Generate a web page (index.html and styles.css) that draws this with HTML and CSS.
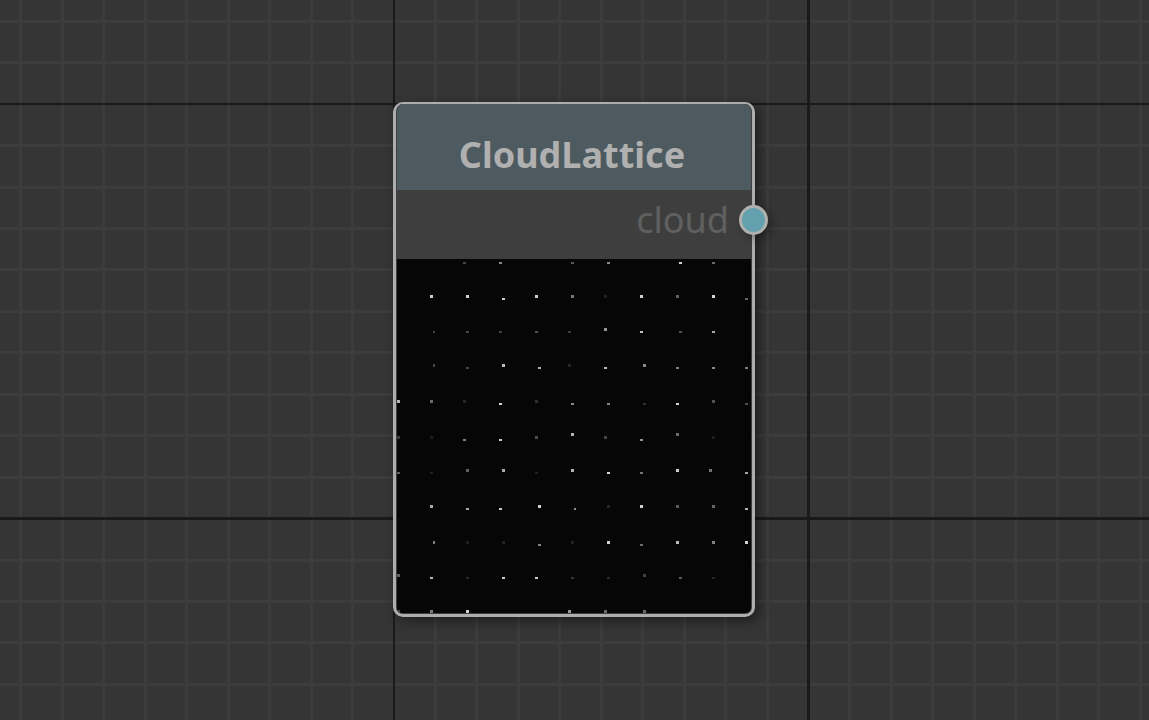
FILE: index.html
```html
<!DOCTYPE html>
<html lang="en">
<head>
<meta charset="utf-8">
<title>CloudLattice</title>
<link rel="stylesheet" href="styles.css">
</head>
<body>
<main class="graph">
  <svg class="grid" aria-hidden="true" shape-rendering="crispEdges">
    <path class="grid-minor"/>
    <path class="grid-major"/>
  </svg>
  <article class="node">
    <header class="node-header"><h1 class="node-title">CloudLattice</h1></header>
    <div class="node-output">
      <label class="port-label" for="port-cloud">cloud</label>
      <button class="port" id="port-cloud" type="button"></button>
    </div>
    <svg class="preview" viewBox="397 259 354 354" shape-rendering="crispEdges" role="img" aria-label="Preview"></svg>
  </article>
</main>
<script src="main.js"></script>
</body>
</html>
```
FILE: styles.css
```css
* {
  box-sizing: border-box;
}

body {
  margin: 0;
  background: #353535;
  font-family: "Noto Sans", "Open Sans", sans-serif;
}

.graph {
  position: relative;
  display: flex;
  align-items: center;
  justify-content: center;
  min-height: 100vh;
  padding: 0 1px 1px 0;
  overflow: hidden;
}

.grid {
  position: absolute;
  inset: 0;
  width: 100%;
  height: 100%;
}

.grid-minor {
  fill: #3c3c3c;
}

.grid-major {
  fill: #1a1a1a;
}

.node {
  position: relative;
  width: 362px;
  padding: 0 1px 1px;
  border: 3px solid #adadad;
  border-top-width: 2px;
  border-radius: 10px;
  background: rgba(64, 64, 64, 0.88) padding-box;
  box-shadow: 4px 4px 12px rgba(0, 0, 0, 0.45);
}

.node-header {
  display: flex;
  align-items: center;
  justify-content: center;
  height: 86px;
  padding: 16px 4px 0 0;
  border-radius: 7px 7px 0 0;
  background: rgba(80, 96, 103, 0.86);
}

.node-title {
  margin: 0;
  color: #b0b0b0;
  font-size: 36px;
  line-height: 48px;
  font-weight: 700;
}

.node-output {
  position: relative;
  display: flex;
  align-items: center;
  justify-content: flex-end;
  height: 69px;
  padding: 0 22px 10px 0;
}

.port-label {
  color: #606060;
  font-size: 36px;
  line-height: 48px;
}

.port {
  position: absolute;
  top: 15px;
  right: -17px;
  width: 29px;
  height: 30px;
  padding: 0;
  border: 3px solid #b0b0b0;
  border-radius: 50%;
  background: #64a1ae;
  box-shadow: 4px 4px 8px rgba(0, 0, 0, 0.3);
}

.preview {
  display: block;
  width: 100%;
  background: #060606;
  border-radius: 0 0 5px 5px;
}
```
FILE: main.js
```js
// Grid: a minor line every 41.45px, a major line every tenth, from the origin.
const STEP = 41.45;

function bands(origin, length) {
  const out = [];
  for (let k = -Math.floor(origin / STEP) - 1; origin + k * STEP < length + 2; k++) {
    const start = Math.round(origin + k * STEP - 1.7);
    out.push({ start, size: k === 0 ? 2 : 3, major: k % 10 === 0 });
  }
  return out;
}

function drawGrid() {
  const w = window.innerWidth;
  const h = window.innerHeight;
  const xs = bands(394.22, w);
  const ys = bands(104.3, h);
  const path = major =>
    xs.filter(b => b.major === major).map(b => `M${b.start} 0h${b.size}v${h}h-${b.size}z`).join('') +
    ys.filter(b => b.major === major).map(b => `M0 ${b.start}h${w}v${b.size}h-${w}z`).join('');
  document.querySelector('.grid-minor').setAttribute('d', path(false));
  document.querySelector('.grid-major').setAttribute('d', path(true));
}

drawGrid();
window.addEventListener('resize', drawGrid);

// Lattice points: x, y, height, grey level, optional width (3 by default).
const points = [
  [463,262,2,68],[499,262,2,136],[571,262,2,85],[607,262,2,136],[679,262,2,210],[712,262,2,105],
  [430,295,3,208],[466,295,3,208],[502,298,2,204],[535,295,3,208],[571,295,3,119],[604,295,3,34],[640,295,3,208],[676,295,3,96],[712,295,3,215],[745,298,2,102],
  [433,331,2,68,2],[466,331,2,68],[499,331,2,64],[535,331,2,80],[568,331,2,58],[604,328,3,150],[640,331,2,190],[679,331,2,78],[712,331,2,165],
  [433,364,3,72,2],[466,367,2,68],[502,364,3,187],[538,367,2,175],[568,364,3,37],[604,367,2,187],[643,364,3,136],[676,367,2,130],[712,367,2,136],[745,367,2,125],
  [397,400,3,180],[430,400,3,105],[463,400,3,37],[499,403,2,215],[535,400,3,48],[571,403,2,136],[607,403,2,130],[643,403,2,50],[676,403,2,215],[712,400,3,80],[745,403,2,80],
  [397,436,3,60],[430,436,3,29],[463,439,2,130],[499,439,2,200],[535,436,3,76],[571,433,3,180],[604,436,3,68],[640,439,2,150],[676,433,3,105],[712,436,3,29],
  [397,472,2,96],[430,472,2,32],[466,469,3,96],[502,469,3,170],[535,472,2,32],[571,469,3,180],[607,472,2,215],[640,472,2,115],[676,469,3,205],[709,469,3,115],[745,472,2,165],
  [430,505,3,170],[466,508,2,165],[499,508,2,200],[538,505,3,205],[574,508,2,145,2],[607,505,3,37],[640,505,3,210],[676,505,3,90],[712,505,3,100],[745,508,2,175],
  [433,541,3,130,2],[466,541,3,32],[502,541,3,34],[538,544,2,130],[571,541,3,34],[607,541,3,210],[640,544,2,110],[676,541,3,185],[712,541,3,130],[745,541,3,210],
  [397,574,3,96],[430,577,2,185],[466,577,2,42],[502,577,2,205],[535,577,2,205],[571,577,2,52],[607,577,2,42],[643,574,3,66],[679,577,2,90],[712,577,2,36],
  [397,610,3,80],[430,610,3,125],[466,610,3,205],[568,610,3,150],[604,610,3,105],[643,610,3,105]
];

const preview = document.querySelector('.preview');
for (const [x, y, height, level, width = 3] of points) {
  const dot = document.createElementNS('http://www.w3.org/2000/svg', 'rect');
  dot.setAttribute('x', x);
  dot.setAttribute('y', y);
  dot.setAttribute('width', width);
  dot.setAttribute('height', height);
  dot.setAttribute('fill', `rgb(${level}, ${level}, ${level})`);
  preview.appendChild(dot);
}
```
